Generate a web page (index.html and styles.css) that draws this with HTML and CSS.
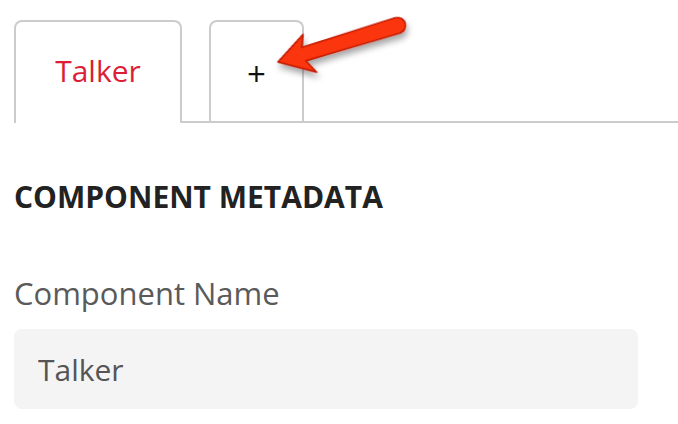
FILE: index.html
```html
<!DOCTYPE html>
<html lang="en">
  <head>
    <meta charset="UTF-8" />
    <meta name="viewport" content="width=device-width, initial-scale=1.0" />
    <title>component editor</title>

    <link rel="stylesheet" href="styles.css">
  </head>

  <body>
    <div class="tabs">
      <div class="tab tab-active">Talker</div>
      <div class="tab-rest">
        <div class="tab tab-add">+</div>
      </div>
    </div>

    <div class="section">
      <h2 class="section-title">COMPONENT METADATA</h2>
      <label class="field-label" for="name">Component Name</label>
      <input class="field-input" id="name" type="text" value="Talker" />
    </div>

    <!-- annotation arrow -->
    <svg class="arrow" width="678" height="424" viewBox="0 0 678 424">
      <defs>
        <filter id="shadow" x="-20%" y="-40%" width="140%" height="200%">
          <feDropShadow dx="0" dy="5" stdDeviation="3" flood-color="#000" flood-opacity="0.35" />
        </filter>
      </defs>
      <g transform="translate(278 62) rotate(-17)" filter="url(#shadow)">
        <path d="M0 0 L32 -19 L27 -7 L125 -8 A8 8 0 0 1 125 8 L27 7 L34 21 Z"
          fill="#fb3410" stroke="#c41a00" stroke-width="1.6" stroke-linejoin="round" />
      </g>
    </svg>
  </body>
</html>
```

FILE: styles.css
```css
* {
  margin: 0;
  padding: 0;
  box-sizing: border-box;
  font-family: "Open Sans", sans-serif;
}
body {
  background: #fff;
  width: 678px;
  height: 424px;
  overflow: hidden;
  position: relative;
}

.tabs {
  display: flex;
  padding: 20px 0 0 14px;
}
.tab {
  display: flex;
  align-items: center;
  justify-content: center;
  border: 2px solid #cccccc;
  border-bottom: none;
  border-radius: 8px 8px 0 0;
  height: 103px;
  background: #fff;
}
.tab-active {
  width: 168px;
  color: #db1e36;
  font-size: 30px;
  padding-bottom: 4px;
}
.tab-rest {
  flex: 1;
  display: flex;
  align-items: flex-end;
  padding-left: 27px;
  border-bottom: 2px solid #cccccc;
}
.tab-add {
  width: 95px;
  height: 101px;
  color: #111;
  font-size: 33px;
  padding-top: 3px;
}

.section {
  padding: 0 40px 0 14px;
}
.section-title {
  margin-top: 56px;
  font-size: 30px;
  font-weight: 700;
  color: #222;
  line-height: 36px;
}
.field-label {
  display: block;
  margin-top: 61px;
  font-size: 31px;
  color: #5a5a5a;
  line-height: 34px;
}
.field-input {
  display: block;
  margin-top: 19px;
  width: 624px;
  height: 80px;
  padding: 0 24px;
  border: none;
  border-radius: 8px;
  background: #f4f4f4;
  font-family: "Open Sans", sans-serif;
  font-size: 30px;
  color: #555;
  outline: none;
}

.arrow {
  position: absolute;
  top: 0;
  left: 0;
  pointer-events: none;
}
```
